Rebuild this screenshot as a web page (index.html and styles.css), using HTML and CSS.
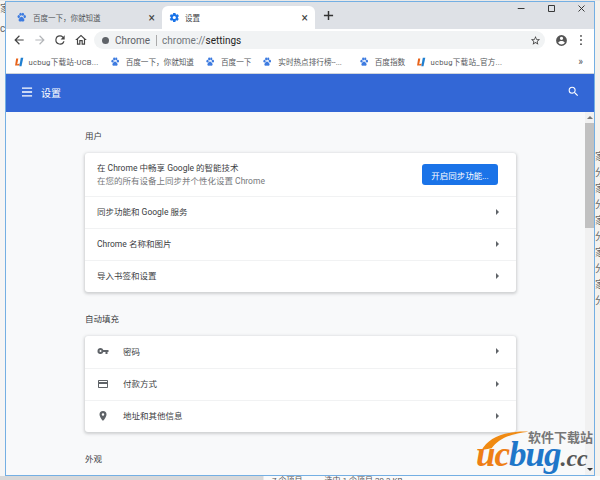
FILE: index.html
```html
<!DOCTYPE html>
<html lang="zh-CN">
<head>
    <meta charset="UTF-8">
    <title>设置</title>
    <link rel="stylesheet" href="styles.css">
</head>
<body>
    <svg class="defs" width="0" height="0">
        <symbol id="paw" viewBox="0 0 24 24">
            <ellipse cx="6" cy="10" rx="2.6" ry="3.4"/>
            <ellipse cx="10" cy="4.8" rx="2.6" ry="3.4"/>
            <ellipse cx="15" cy="4.8" rx="2.6" ry="3.4"/>
            <ellipse cx="19" cy="10" rx="2.6" ry="3.4"/>
            <path d="M12 10.5c-2.6 0-3.6 2.6-5.2 4.2-1.8 1.8-1.6 5.8 1.8 6 1.4.1 2.2-.6 3.4-.6s2 .7 3.4.6c3.4-.2 3.6-4.2 1.8-6-1.6-1.6-2.6-4.2-5.200-4.200z"/>
        </symbol>
        <symbol id="uc" viewBox="0 0 14 14">
            <path fill="#e8641b" d="M3 2h3L4.500 10 8 9l-.5 3H1.500z"/>
            <path fill="#1f7fd0" d="M9.500 1H13l-2.500 12H7.500z"/>
        </symbol>
        <symbol id="gear" viewBox="0 0 24 24">
            <path d="M19.400 13c.04-.3.1-.7.1-1s-.03-.7-.1-1l2.100-1.600c.2-.15.25-.4.1-.65l-2-3.450c-.1-.2-.4-.3-.6-.2l-2.500 1c-.5-.4-1.100-.7-1.700-1L14 2.400c0-.2-.2-.4-.5-.4h-4c-.25 0-.45.2-.5.4l-.4 2.700c-.6.25-1.200.6-1.700 1l-2.500-1c-.2-.1-.5 0-.6.2l-2 3.450c-.1.250-.1.500.1.650L4 11c-.04.3-.1.700-.1 1s.03.700.1 1l-2.100 1.600c-.2.150-.25.400-.1.650l2 3.450c.1.200.4.300.6.200l2.500-1c.5.400 1.100.700 1.700 1l.4 2.700c.05.200.25.400.5.400h4c.25 0 .45-.2.5-.4l.4-2.700c.6-.25 1.200-.6 1.700-1l2.500 1c.2.100.5 0 .6-.2l2-3.450c.1-.25.1-.5-.1-.65zM11.500 15.500a3.500 3.500 0 1 1 0-7 3.500 3.500 0 0 1 0 7z"/>
        </symbol>
        <symbol id="arrow" viewBox="0 0 24 24">
            <path d="M20 11H7.830l5.590-5.590L12 4l-8 8 8 8 1.410-1.410L7.830 13H20z"/>
        </symbol>
    </svg>

    <div class="desk">
        <div class="side side_left">
            <span>家</span><span>c</span>
        </div>

        <div class="window">
            <div class="tabstrip">
                <div class="tab">
                    <svg class="favicon blue"><use href="#paw"/></svg>
                    <span class="tab_title">百度一下，你就知道</span>
                    <span class="tab_close">×</span>
                </div>
                <div class="tab tab_active">
                    <svg class="favicon gear_blue"><use href="#gear"/></svg>
                    <span class="tab_title">设置</span>
                    <span class="tab_close">×</span>
                </div>
                <svg class="new_tab" viewBox="0 0 12 12"><path d="M5.200 1h1.600v4.200H11v1.600H6.800V11H5.200V6.800H1V5.200h4.200z"/></svg>
                <div class="controls">
                    <svg viewBox="0 0 12 12"><path d="M1 6h9" /></svg>
                    <svg viewBox="0 0 12 12"><path d="M2 2h8v8H2z" /></svg>
                    <svg viewBox="0 0 12 12"><path d="M2 2l8 8M10 2l-8 8" /></svg>
                </div>
            </div>

            <div class="toolbar">
                <svg class="nav_icon"><use href="#arrow"/></svg>
                <svg class="nav_icon nav_off flip"><use href="#arrow"/></svg>
                <svg class="nav_icon" viewBox="0 0 24 24"><path d="M17.650 6.350A7.960 7.960 0 0 0 12 4a8 8 0 1 0 7.730 10h-2.080A6 6 0 1 1 12 6c1.660 0 3.140.690 4.220 1.780L13 11h7V4z"/></svg>
                <svg class="nav_icon" viewBox="0 0 24 24"><path d="M12 5.700l5 4.500V18h-2v-6H9v6H7v-7.800zM12 3L2 12h3v8h6v-6h2v6h6v-8h3z"/></svg>
                <div class="omnibox">
                    <span class="site_dot"></span>
                    <span class="scheme">Chrome</span>
                    <span class="omni_sep"></span>
                    <span class="url"><span class="url_dim">chrome://</span>settings</span>
                    <svg class="star" viewBox="0 0 24 24"><path d="M22 9.240l-7.190-.62L12 2 9.190 8.630 2 9.240l5.460 4.730L5.820 21 12 17.270 18.180 21l-1.630-7.030zM12 15.400l-3.760 2.270 1-4.280-3.320-2.880 4.380-.38L12 6.100l1.710 4.040 4.380.38-3.320 2.880 1 4.280z"/></svg>
                </div>
                <svg class="avatar" viewBox="0 0 24 24"><path d="M12 2a10 10 0 1 0 0 20 10 10 0 0 0 0-20zm0 3a3 3 0 1 1 0 6 3 3 0 0 1 0-6zm0 14.200a7.200 7.200 0 0 1-6-3.220c.03-2 4-3.080 6-3.080s5.970 1.090 6 3.080a7.200 7.200 0 0 1-6 3.220z"/></svg>
                <svg class="kebab" viewBox="0 0 4 16"><circle cx="2" cy="2.500" r="1.300"/><circle cx="2" cy="8" r="1.300"/><circle cx="2" cy="13.500" r="1.300"/></svg>
            </div>

            <div class="bookmarks">
                <div class="mark mark_uc"><svg class="mark_icon"><use href="#uc"/></svg><span>ucbug下载站-UCB...</span></div>
                <div class="mark"><svg class="mark_icon blue"><use href="#paw"/></svg><span>百度一下，你就知道</span></div>
                <div class="mark"><svg class="mark_icon blue"><use href="#paw"/></svg><span>百度一下</span></div>
                <div class="mark mark_long"><svg class="mark_icon blue"><use href="#paw"/></svg><span>实时热点排行榜--...</span></div>
                <div class="mark"><svg class="mark_icon blue"><use href="#paw"/></svg><span>百度指数</span></div>
                <div class="mark mark_uc"><svg class="mark_icon"><use href="#uc"/></svg><span>ucbug下载站_官方...</span></div>
                <span class="more_marks">»</span>
            </div>

            <div class="settings_bar">
                <svg class="menu_icon" viewBox="0 0 12 10"><path d="M0 0h11v1.400H0zM0 4.300h11v1.400H0zM0 8.600h11V10H0z"/></svg>
                <span class="settings_title">设置</span>
                <svg class="search_icon" viewBox="0 0 24 24"><path d="M15.500 14h-.79l-.28-.27A6.470 6.470 0 0 0 16 9.500 6.500 6.500 0 1 0 9.500 16c1.610 0 3.090-.59 4.230-1.570l.27.28v.79l5 4.990L20.490 19zm-6 0C7.010 14 5 11.990 5 9.500S7.010 5 9.500 5 14 7.010 14 9.500 11.990 14 9.500 14z"/></svg>
            </div>

            <div class="body_area">
                <div class="content">
                    <h2 class="section_title">用户</h2>
                    <div class="card">
                        <div class="row row_tall">
                            <div class="row_main">
                                <div>在 Chrome 中畅享 Google 的智能技术</div>
                                <div class="row_sub">在您的所有设备上同步并个性化设置 Chrome</div>
                            </div>
                            <button class="sync_btn">开启同步功能...</button>
                        </div>
                        <div class="row"><span class="row_main">同步功能和 Google 服务</span><span class="caret"></span></div>
                        <div class="row"><span class="row_main">Chrome 名称和图片</span><span class="caret"></span></div>
                        <div class="row"><span class="row_main">导入书签和设置</span><span class="caret"></span></div>
                    </div>

                    <h2 class="section_title">自动填充</h2>
                    <div class="card">
                        <div class="row">
                            <svg class="row_icon" viewBox="0 0 24 24"><path d="M12.650 10A6 6 0 0 0 7 6a6 6 0 1 0 5.650 8H17v4h4v-4h2v-4zM7 14a2 2 0 1 1 0-4 2 2 0 0 1 0 4z"/></svg>
                            <span class="row_main">密码</span><span class="caret"></span>
                        </div>
                        <div class="row">
                            <svg class="row_icon" viewBox="0 0 24 24"><path d="M20 4H4c-1.110 0-1.990.890-1.990 2L2 18c0 1.110.890 2 2 2h16c1.110 0 2-.890 2-2V6c0-1.110-.890-2-2-2zm0 14H4v-6h16zm0-10H4V6h16z"/></svg>
                            <span class="row_main">付款方式</span><span class="caret"></span>
                        </div>
                        <div class="row">
                            <svg class="row_icon" viewBox="0 0 24 24"><path d="M12 2a7 7 0 0 0-7 7c0 5.250 7 13 7 13s7-7.750 7-13a7 7 0 0 0-7-7zm0 9.500a2.500 2.500 0 1 1 0-5 2.500 2.500 0 0 1 0 5z"/></svg>
                            <span class="row_main">地址和其他信息</span><span class="caret"></span>
                        </div>
                    </div>

                    <h2 class="section_title">外观</h2>
                </div>

                <div class="scrollbar">
                    <span class="scroll_up"></span>
                    <span class="scroll_thumb"></span>
                    <span class="scroll_down"></span>
                </div>

                <!-- site watermark over the page -->
                <div class="watermark">
                    <svg class="swoosh" viewBox="0 0 60 24"><path d="M2 24C10 10 28 1 58 2 38 4 22 10 14 22z"/></svg>
                    <div class="wm_cn">软件下载站</div>
                    <div class="wm_en"><span class="wm_uc">uc</span><span class="wm_bug">bug</span><span class="wm_cc">.cc</span></div>
                </div>
            </div>
        </div>

        <div class="side side_right">
            <span>家</span><span>分</span><span>家</span><span>分</span><span>家</span><span>分</span><span>家</span><span>分</span><span>家</span><span>分</span>
        </div>
    </div>

    <div class="status">
        <span>7 个项目</span><span>选中 1 个项目 29.3 KB</span>
    </div>
</body>
</html>
```

FILE: styles.css
```css
/*tag*/
html, body{
    margin: 0;
    height: 100%;
    overflow: hidden;
}
body{
    width: 600px;
    height: 480px;
    background: #e9e9e9;
    font-family: Roboto, "Noto Sans CJK SC", sans-serif;
    color: #3c4043;
}
svg{
    display: block;
    flex: none;
}

/*desktop behind the window*/
.defs{
    position: absolute;
}
.desk{
    display: flex;
    height: 476px;
    padding-top: 1px;
    box-sizing: border-box;
}
.side{
    flex: none;
    width: 5px;
    overflow: hidden;
    background: #f3f3f3;
    font-size: 10px;
    line-height: 16px;
    color: #666;
    display: flex;
    flex-direction: column;
}
.side_left{
    gap: 4px;
    background: #f5f5f5;
}
.side_right{
    padding-top: 148px;
    gap: 0;
    background: #f4f2ee;
}
.status{
    height: 4px;
    padding-left: 272px;
    display: flex;
    gap: 22px;
    background: linear-gradient(90deg, #d8d8d8 0, #d8d8d8 263px, #fafafa 264px);
    font-size: 8px;
    line-height: 9px;
    color: #555;
    overflow: hidden;
}

/*window*/
.window{
    flex: none;
    width: 590px;
    box-sizing: border-box;
    border: 1px solid #74afe3;
    display: flex;
    flex-direction: column;
    overflow: hidden;
    background: #fff;
}

/*tab strip*/
.tabstrip{
    flex: none;
    height: 27px;
    box-sizing: border-box;
    padding: 4px 0 0 0;
    background: #dee1e6;
    display: flex;
    align-items: stretch;
}
.tab{
    width: 156px;
    box-sizing: border-box;
    padding: 0 7px 0 10px;
    display: flex;
    align-items: center;
    gap: 6px;
    font-size: 7.5px;
    color: #55585c;
}
.tab_active{
    width: 153px;
    background: #fff;
    border-radius: 6px 6px 0 0;
    color: #3c4043;
    padding-left: 7px;
    padding-right: 7px;
    gap: 5px;
}
.tab_title{
    flex: 1;
}
.tab_close{
    font-size: 12px;
    line-height: 12px;
    color: #444;
}
.favicon{
    width: 11px;
    height: 11px;
}
.blue{
    fill: #3d7be0;
}
.gear_blue{
    fill: #1a73e8;
}
.new_tab{
    width: 11px;
    height: 11px;
    margin: 4px 0 0 8px;
    fill: #333;
}
.controls{
    margin-left: auto;
    margin-top: -3px;
    padding-right: 8px;
    display: flex;
    gap: 21px;
}
.controls svg{
    width: 9px;
    height: 9px;
    margin-top: 1px;
    fill: none;
    stroke: #333;
    stroke-width: 1.300;
}

/*toolbar*/
.toolbar{
    flex: none;
    height: 22px;
    display: flex;
    align-items: center;
    padding-left: 6px;
    background: #fff;
}
.nav_icon{
    width: 14px;
    height: 14px;
    margin-right: 6.500px;
    fill: #444;
}
.nav_off{
    fill: #b4b6b9;
}
.flip{
    transform: scaleX(-1);
}
.omnibox{
    width: 451px;
    height: 18px;
    box-sizing: border-box;
    padding: 0 4px 0 8px;
    border-radius: 9px;
    background: #f1f3f4;
    display: flex;
    align-items: center;
    font-size: 10px;
}
.site_dot{
    width: 7px;
    height: 7px;
    margin-right: 6px;
    border-radius: 50%;
    background: #5f6368;
}
.scheme{
    color: #5f6368;
}
.omni_sep{
    width: 1px;
    height: 11px;
    margin: 0 5px 0 6px;
    background: #aaa;
}
.url{
    color: #222;
}
.url_dim{
    color: #70757a;
}
.star{
    width: 11px;
    height: 11px;
    margin-left: auto;
    fill: #444;
}
.avatar{
    width: 13px;
    height: 13px;
    margin-left: 10px;
    fill: #555;
}
.kebab{
    width: 4px;
    height: 12px;
    margin-left: 11px;
    fill: #555;
}

/*bookmarks*/
.bookmarks{
    flex: none;
    height: 23px;
    box-sizing: border-box;
    padding: 0 0 1px 8px;
    display: flex;
    align-items: center;
    gap: 11px;
    border-bottom: 1px solid #cfd4da;
    background: #fff;
    font-size: 7.600px;
    color: #55585c;
}
.mark{
    display: flex;
    align-items: center;
    gap: 6px;
}
.mark_uc{
    gap: 4.500px;
    letter-spacing: .25px;
}
.mark_long{
    margin-right: 6px;
}
.mark_icon{
    width: 10px;
    height: 10px;
}
.more_marks{
    margin-left: auto;
    margin-right: 11px;
    font-size: 10px;
}

/*settings header*/
.settings_bar{
    flex: none;
    height: 38px;
    padding: 0 14px 2px 16px;
    box-sizing: border-box;
    display: flex;
    align-items: center;
    gap: 8px;
    background: #3367d6;
    color: #fff;
}
.menu_icon{
    width: 11px;
    height: 10px;
    fill: #fff;
}
.settings_title{
    font-size: 10px;
}
.search_icon{
    width: 13px;
    height: 13px;
    margin-left: auto;
    margin-top: -2px;
    fill: #fff;
}

/*page body*/
.body_area{
    flex: 1;
    min-height: 0;
    position: relative;
    display: flex;
    background: #f8f9fa;
}
.content{
    flex: 1;
    padding: 0 0 0 79px;
    overflow: hidden;
}
.section_title{
    margin: 0;
    height: 41px;
    box-sizing: border-box;
    padding-top: 19px;
    font-size: 8.500px;
    line-height: 11px;
    font-weight: normal;
    color: #3c4043;
}
.card{
    width: 431px;
    margin-bottom: 3px;
    background: #fff;
    border-radius: 3px;
    box-shadow: 0 1px 3px 1px rgba(60, 64, 67, .22);
}
.row{
    height: 32px;
    box-sizing: border-box;
    padding: 0 17px 2px 12px;
    display: flex;
    align-items: center;
    border-top: 1px solid #f1f2f3;
    font-size: 8.500px;
}
.row:first-child{
    border-top: 0;
}
.row_tall{
    height: 43px;
    padding-right: 17px;
}
.row_main{
    flex: 1;
    padding-top: 2px;
    line-height: 13px;
}
.row_sub{
    color: #77797c;
}
.row_icon{
    width: 12px;
    height: 12px;
    margin-right: 14px;
    fill: #5f6368;
}
.caret{
    width: 0;
    height: 0;
    border-left: 3.500px solid #5f6368;
    border-top: 3.500px solid transparent;
    border-bottom: 3.500px solid transparent;
}
.sync_btn{
    width: 76px;
    height: 21px;
    margin: 2px 1px 0 0;
    padding: 0;
    border: 0;
    border-radius: 3px;
    background: #1a73e8;
    color: #fff;
    font-family: inherit;
    font-size: 8.500px;
}

/*scrollbar*/
.scrollbar{
    flex: none;
    width: 9px;
    display: flex;
    flex-direction: column;
    background: #f1f1f1;
}
.scroll_up, .scroll_down{
    flex: none;
    width: 0;
    height: 0;
    margin: 4px auto;
    border-left: 3px solid transparent;
    border-right: 3px solid transparent;
}
.scroll_up{
    border-bottom: 3px solid #777;
}
.scroll_down{
    margin-top: auto;
    border-top: 3px solid #333;
}
.scroll_thumb{
    height: 105px;
    background: #c1c1c1;
}

/*watermark*/
.watermark{
    position: absolute;
    right: 0;
    bottom: 0;
    width: 120px;
    height: 46px;
}
.swoosh{
    position: absolute;
    left: 6px;
    top: 1px;
    width: 50px;
    height: 20px;
    fill: #f08a12;
}
.wm_cn{
    position: absolute;
    right: 1px;
    top: 4px;
    font-size: 13px;
    line-height: 9px;
    font-weight: bold;
    color: #777;
    white-space: nowrap;
}
.wm_en{
    position: absolute;
    left: 2px;
    top: 14px;
    font-family: "Liberation Serif", serif;
    font-style: italic;
    font-weight: bold;
    font-size: 35px;
    line-height: 24px;
    letter-spacing: -1px;
    white-space: nowrap;
}
.wm_uc{
    color: #ee7f16;
}
.wm_bug{
    color: #1f77c9;
}
.wm_cc{
    color: #555;
    font-size: 24px;
    letter-spacing: 0;
}
```
